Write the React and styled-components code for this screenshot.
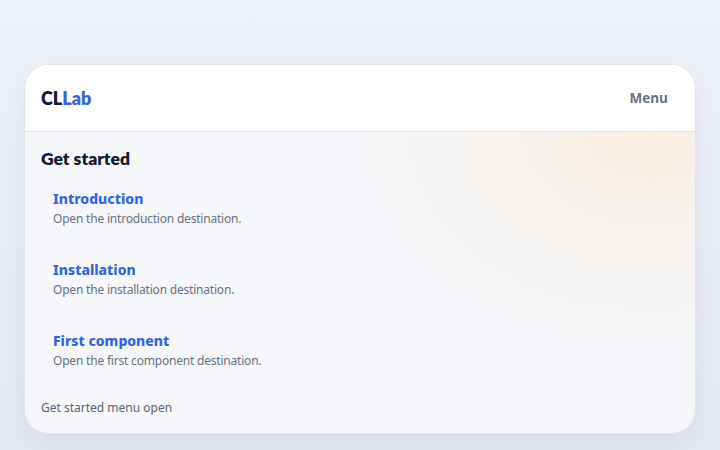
import React from "react";
import styled, { createGlobalStyle } from "styled-components";

const GlobalStyle = createGlobalStyle`
  html, body {
    margin: 0;
    padding: 0;
    height: 100%;
  }
  body {
    background: linear-gradient(180deg, #eef1f8 0%, #e6e9f0 100%);
    font-family: "Noto Sans", "Open Sans", sans-serif;
  }
`;

const Page = styled.div`
  width: 720px;
  height: 450px;
  box-sizing: border-box;
  padding: 64px 24px 16px;
  display: flex;
`;

const Card = styled.div`
  flex: 1;
  display: flex;
  flex-direction: column;
  border-radius: 24px;
  overflow: hidden;
  border: 1px solid #dfe3ec;
  background: #f5f7fa;
  box-shadow: 0 10px 30px rgba(30, 40, 70, 0.06);
`;

const Header = styled.header`
  height: 66px;
  flex-shrink: 0;
  display: flex;
  align-items: center;
  justify-content: space-between;
  padding: 0 27px 0 16px;
  background: #ffffff;
  border-bottom: 1px solid #dde1ea;
`;

const Logo = styled.div`
  font-family: "Lato", sans-serif;
  font-weight: 800;
  font-size: 18px;
  color: #131a33;
`;

const LogoAccent = styled.span`
  color: #3b63d8;
`;

const MenuButton = styled.button`
  border: none;
  background: none;
  padding: 0;
  font-family: "Open Sans", sans-serif;
  font-weight: 700;
  font-size: 13.5px;
  color: #6b7389;
`;

const Body = styled.main`
  flex: 1;
  display: flex;
  flex-direction: column;
  padding: 16px 16px 0;
  background: radial-gradient(
    ellipse 300px 220px at 625px 0px,
    #f8ede0 0%,
    rgba(247, 240, 232, 0.75) 40%,
    rgba(245, 247, 250, 0) 100%
  );
`;

const Title = styled.h2`
  margin: 0 0 20px;
  font-family: "Lato", sans-serif;
  font-weight: 800;
  font-size: 17.5px;
  line-height: 22px;
  color: #131a33;
`;

const List = styled.ul`
  list-style: none;
  margin: 0;
  padding: 0;
  display: flex;
  flex-direction: column;
  gap: 33px;
`;

const Item = styled.li`
  padding: 0 12px;
`;

const ItemTitle = styled.a`
  display: block;
  font-family: "Noto Sans", sans-serif;
  font-weight: 800;
  font-size: 14px;
  line-height: 18px;
  color: #3266e0;
  text-decoration: none;
`;

const ItemText = styled.p`
  margin: 2px 0 0;
  font-family: "Noto Sans", sans-serif;
  font-size: 12px;
  letter-spacing: -0.2px;
  line-height: 18px;
  color: #6b7280;
`;

const Status = styled.p`
  margin: 29px 0 0;
  font-family: "Noto Sans", sans-serif;
  font-size: 12px;
  line-height: 18px;
  color: #5d6374;
`;

const items = [
  { title: "Introduction", text: "Open the introduction destination." },
  { title: "Installation", text: "Open the installation destination." },
  { title: "First component", text: "Open the first component destination." },
];

const App = () => (
  <>
    <GlobalStyle />
    <Page>
      <Card>
        <Header>
          <Logo>
            CL<LogoAccent>Lab</LogoAccent>
          </Logo>
          <MenuButton>Menu</MenuButton>
        </Header>
        <Body>
          <Title>Get started</Title>
          <List>
            {items.map((item) => (
              <Item key={item.title}>
                <ItemTitle href="#">{item.title}</ItemTitle>
                <ItemText>{item.text}</ItemText>
              </Item>
            ))}
          </List>
          <Status>Get started menu open</Status>
        </Body>
      </Card>
    </Page>
  </>
);

export default App;
